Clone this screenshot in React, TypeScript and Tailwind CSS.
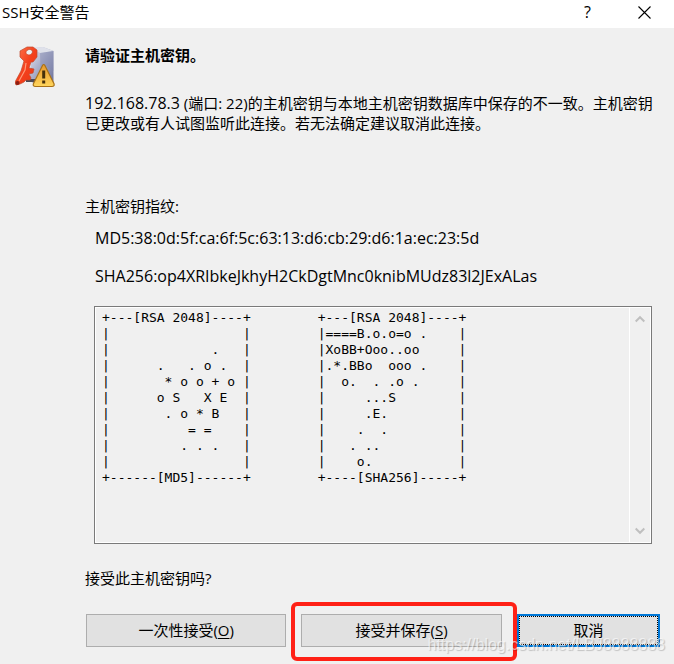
const md5Art = `+---[RSA 2048]----+
|                 |
|             .   |
|      .   . o .  |
|       * o o + o |
|      o S   X E  |
|       . o * B   |
|          = =    |
|         . . .   |
|                 |
+------[MD5]------+`;

const shaArt = `+---[RSA 2048]----+
|====B.o.o=o .    |
|XoBB+Ooo..oo     |
|.*.BBo  ooo .    |
|  o.  . .o .     |
|     ...S        |
|     .E.         |
|    .  .         |
|   . ..          |
|    o.           |
+----[SHA256]-----+`;

const buttonClass = "h-[33px] w-full border border-[#adadad] bg-[#e1e1e1] pb-0.5";

const HostKeyIcon = () => (
  <svg width="40" height="42" viewBox="0 0 40 42" className="block" aria-hidden="true">
    <defs>
      <linearGradient id="server" x1="0" y1="0" x2="1" y2="1">
        <stop offset="0" stopColor="#e8eaf4" />
        <stop offset="0.5" stopColor="#a3a8c4" />
        <stop offset="1" stopColor="#666b96" />
      </linearGradient>
      <linearGradient id="key" x1="0" y1="0" x2="1" y2="1">
        <stop offset="0" stopColor="#ff7a50" />
        <stop offset="0.5" stopColor="#f4401c" />
        <stop offset="1" stopColor="#e83814" />
      </linearGradient>
      <linearGradient id="warn" x1="0" y1="0" x2="0" y2="1">
        <stop offset="0" stopColor="#e8992c" />
        <stop offset="0.6" stopColor="#f6bc48" />
        <stop offset="1" stopColor="#ffd65c" />
      </linearGradient>
    </defs>
    <path d="M17 2 28 1 38.500 5v32l-14 3-10-5z" fill="url(#server)" />
    <path d="M17 2 28 1 38.500 5 25 7z" fill="#dfe1ea" />
    <path d="M25 7 38.500 5v20l-8-5-5 5z" fill="#8388b0" opacity="0.4" />
    <path d="M11 33h10v3H11z" fill="#4e4a55" />
    {/* Key */}
    <path
      fillRule="evenodd"
      d="M12 1h6l4 3v7l-4 5h-2l-2 6 5 1-1 4-4 1 2 4-1 2h-4l-2 2-4 2-4 1-1-3 6-11 3-10-4-4V5zm2.500 2.500c-2 0-3.500 1.500-3.500 3S12.500 9 14 9s3.500-1.500 3.500-3-1-2.500-3-2.500z"
      fill="url(#key)"
      stroke="#c0492c"
      strokeWidth="0.7"
      strokeLinejoin="round"
    />
    <path d="m11 17-1 7-6 11" fill="none" stroke="#ff9a78" strokeWidth="1.2" />
    <circle cx="2.500" cy="37" r="2" fill="#8c2014" />
    {/* Warning sign */}
    <path
      d="M27.500 19.500q1.200-2 2.400 0l9 18q1 3-2 3H20.500q-3 0-2-3z"
      fill="url(#warn)"
      stroke="#a87118"
      strokeWidth="1.200"
    />
    <path d="M28.700 24.500v8M28.700 34.500v3" stroke="#46300a" strokeWidth="3" />
  </svg>
);

const App = () => {
  return (
    <div className="relative min-h-screen bg-[#f0f0f0] font-['Open_Sans','Noto_Sans_CJK_SC',sans-serif] text-[15px] leading-5 text-black">
      {/* Title bar */}
      <header className="flex h-7 bg-white pr-px">
        <h1 className="flex-1 pl-0.5 pt-0.5">SSH安全警告</h1>
        <button type="button" aria-label="Help" className="flex h-6 w-[57px] items-center justify-center text-base">
          ?
        </button>
        <button type="button" aria-label="Close" className="flex h-6 w-[57px] items-center justify-center">
          <svg width="13" height="13" viewBox="0 0 13 13" aria-hidden="true">
            <path d="M.5.5l12 12M12.500.5l-12 12" stroke="#000" strokeWidth="1.1" fill="none" />
          </svg>
        </button>
      </header>

      <main className="flex pl-[15px]">
        <div className="w-[70px] shrink-0 pt-[18px]">
          <HostKeyIcon />
        </div>

        <div className="min-w-0 flex-1 pr-[14px] pt-[17px]">
          <h2 className="font-bold">请验证主机密钥。</h2>
          <p className="mt-7">
            <span className="text-base leading-5">192.168.78.3</span>{" "}
            (端口: 22)的主机密钥与本地主机密钥数据库中保存的不一致。主机密钥已更改或有人试图监听此连接。若无法确定建议取消此连接。
          </p>

          <h3 className="mt-[63px]">主机密钥指纹:</h3>
          <p className="mt-3 pl-2.5 text-base leading-5">MD5:38:0d:5f:ca:6f:5c:63:13:d6:cb:29:d6:1a:ec:23:5d</p>
          <p className="mt-[18px] pl-2.5 text-base leading-5">SHA256:op4XRIbkeJkhyH2CkDgtMnc0knibMUdz83l2JExALas</p>

          {/* Randomart box */}
          <div className="ml-[9px] mr-2 mt-5 flex h-[238px] border border-[#7a7a7a]">
            <div className="flex min-w-0 flex-1 gap-[67px] overflow-hidden border-y border-l border-white px-1.5 pt-0.5">
              <pre className="font-['DejaVu_Sans_Mono',monospace] text-[13px] leading-4">{md5Art}</pre>
              <pre className="font-['DejaVu_Sans_Mono',monospace] text-[13px] leading-4">{shaArt}</pre>
            </div>
            <div className="flex w-[22px] flex-col items-center justify-between border border-white py-[7px]">
              <svg width="10" height="8" viewBox="0 0 10 8" aria-hidden="true">
                <path d="M.7 6.500 5 2.200l4.300 4.300" stroke="#bfbfbf" strokeWidth="2" fill="none" />
              </svg>
              <svg width="10" height="8" viewBox="0 0 10 8" aria-hidden="true">
                <path d="M.7 1.500 5 5.800l4.300-4.300" stroke="#bfbfbf" strokeWidth="2" fill="none" />
              </svg>
            </div>
          </div>

          <p className="mt-6">接受此主机密钥吗?</p>

          <div className="mt-[26px] grid grid-cols-[7fr_7fr_5fr] gap-[15px] pl-px">
            <button type="button" className={buttonClass}>
              一次性接受(<u className="underline-offset-2">O</u>)
            </button>
            <div className="relative">
              <button type="button" className={buttonClass}>
                接受并保存(<u className="underline-offset-2">S</u>)
              </button>
              {/* Highlight around the recommended choice */}
              <div className="pointer-events-none absolute -bottom-[14px] -left-2.5 -right-[15px] -top-3 z-10 rounded-md border-4 border-[#ff2116]" />
            </div>
            <button type="button" className="h-[33px] w-full border-2 border-[#0078d7] bg-[#e1e1e1]">
              <span className="flex h-full items-center justify-center border border-dotted border-black pb-0.5">取消</span>
            </button>
          </div>
        </div>
      </main>

      <div className="pointer-events-none absolute bottom-[7px] right-[9px] z-20 font-['Liberation_Sans',sans-serif] text-base text-white/60 [text-shadow:1px_1px_1px_rgba(0,0,0,0.2)]">
        https://blog.csdn.net/LBJ8888888
      </div>
    </div>
  );
};

export default App;
